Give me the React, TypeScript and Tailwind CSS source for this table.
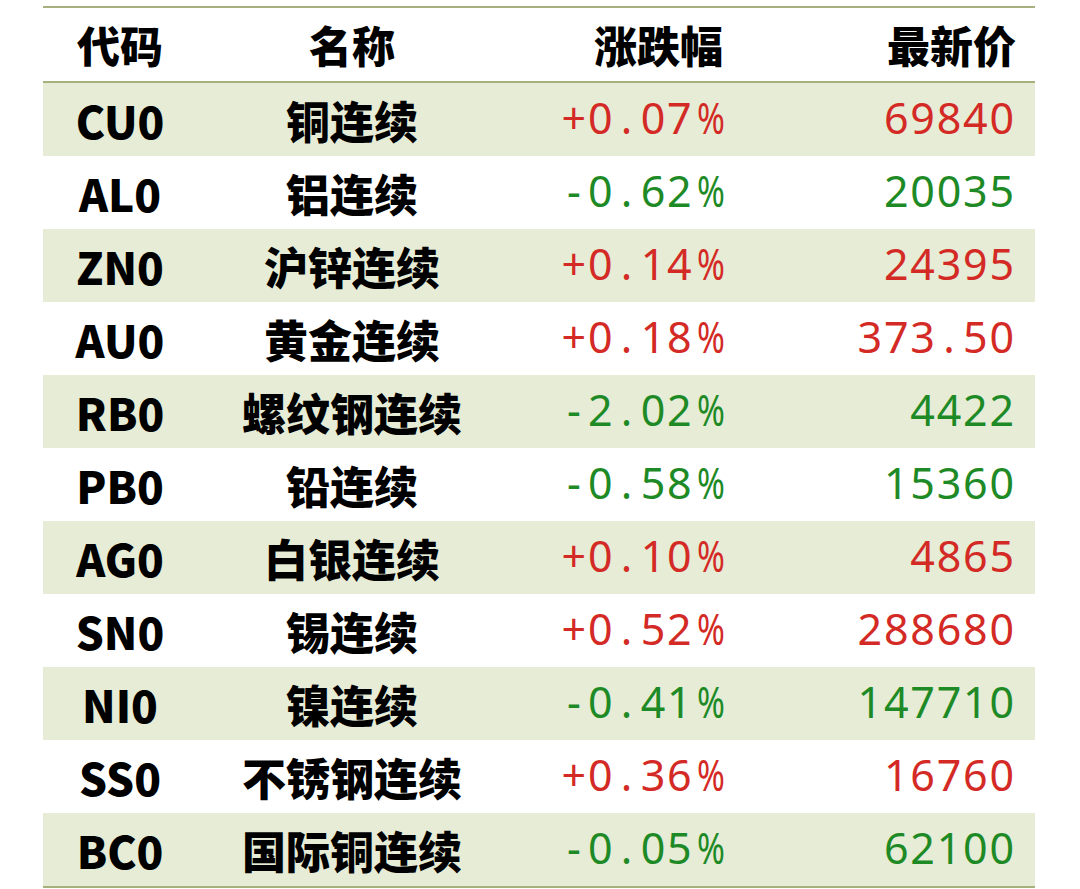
const rows = [
  { code: 'CU0', name: '铜连续', change: '+0.07%', price: '69840' },
  { code: 'AL0', name: '铝连续', change: '-0.62%', price: '20035' },
  { code: 'ZN0', name: '沪锌连续', change: '+0.14%', price: '24395' },
  { code: 'AU0', name: '黄金连续', change: '+0.18%', price: '373.50' },
  { code: 'RB0', name: '螺纹钢连续', change: '-2.02%', price: '4422' },
  { code: 'PB0', name: '铅连续', change: '-0.58%', price: '15360' },
  { code: 'AG0', name: '白银连续', change: '+0.10%', price: '4865' },
  { code: 'SN0', name: '锡连续', change: '+0.52%', price: '288680' },
  { code: 'NI0', name: '镍连续', change: '-0.41%', price: '147710' },
  { code: 'SS0', name: '不锈钢连续', change: '+0.36%', price: '16760' },
  { code: 'BC0', name: '国际铜连续', change: '-0.05%', price: '62100' },
];

const cjk = "font-['Noto_Sans_CJK_SC',sans-serif]";

// digits in fixed cells, like the phone's mono font
function Mono({ text }: { text: string }) {
  return (
    <span className="inline-flex font-['Noto_Sans',sans-serif] text-[43px] leading-none">
      {text.split('').map((ch, i) => (
        <span key={i} className="inline-block w-[26.4px] text-center">
          {ch === '%' ? <span className="inline-block scale-x-[0.78]">%</span> : ch}
        </span>
      ))}
    </span>
  );
}

export default function App() {
  return (
    <div className="min-h-[889px] bg-white pl-[43px] pt-[6px]">
      <div className="w-[992px] border-b-2 border-[#a6b17f]">
        <div
          className={`grid h-[77px] grid-cols-[154px_310px_238px_290px] items-center border-y-2 border-[#a6b17f] text-[43px] font-black text-black ${cjk}`}
        >
          <div className="text-center">代码</div>
          <div className="text-center">名称</div>
          <div className="pr-[22px] text-right">涨跌幅</div>
          <div className="pr-[19px] text-right">最新价</div>
        </div>

        {rows.map((r, i) => {
          const up = r.change.startsWith('+');
          const color = up ? 'text-[#d42a25]' : 'text-[#1e8a26]';
          return (
            <div
              key={r.code}
              className={`grid h-[73px] grid-cols-[154px_310px_238px_290px] items-center ${
                i % 2 === 0 ? 'bg-[#e6ecd6]' : 'bg-white'
              }`}
            >
              <div className={`text-center text-[44px] font-black text-black ${cjk}`}>
                {r.code}
              </div>
              <div className={`text-center text-[44px] font-black text-black ${cjk}`}>
                {r.name}
              </div>
              <div className={`pb-[4px] pr-[26px] text-right ${color}`}>
                <Mono text={r.change} />
              </div>
              <div className={`pb-[4px] pr-[20px] text-right ${color}`}>
                <Mono text={r.price} />
              </div>
            </div>
          );
        })}
      </div>
    </div>
  );
}
